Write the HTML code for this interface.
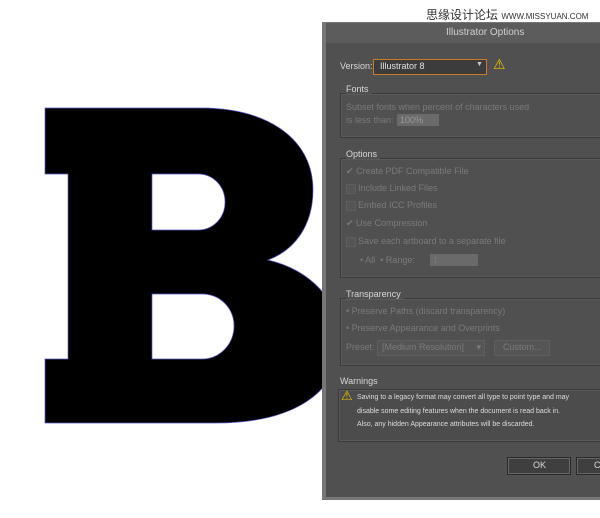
<!DOCTYPE html><html><head><style>
body{margin:0;width:600px;height:518px;background:#fff;position:relative;overflow:hidden;font-family:"Liberation Sans",sans-serif}
.a{position:absolute;white-space:nowrap}
.dlg{position:absolute;left:322px;top:22px;width:290px;height:478px;background:#777}
.in{position:absolute;left:326px;top:23px;width:290px;height:474px;background:#505050}
.tb{position:absolute;left:326px;top:23px;width:290px;height:20px;background:#5c5c5c}
.box{position:absolute;border:1px solid #3a3a3a;box-shadow:inset 0 0 0 1px #5a5a5a}
.t{font-size:9px;color:#d8d8d8}
.d{font-size:9px;color:#7a7a7a}
.cb{position:absolute;width:8px;height:8px;background:#555;border:1px solid #5e5e5e}
</style></head><body>
<svg class="a" style="left:0;top:0" width="600" height="518">
<path fill-rule="evenodd" fill="#000" stroke="#5a5ad0" stroke-width="0.7" d="M45 108 L207 108 C270 110 313 140 313 190 C313 225 295 250 268 260 C310 270 340 300 340 340 C340 395 290 423 216 423 L45 423 L45 359 L68 359 L68 174 L45 174 Z M152 174 L198 174 C213 174 225 186 225 202 C225 218 213 230 198 230 L152 230 Z M152 294 L202 294 C220 294 234 308 234 326 C234 344 220 359 202 359 L152 359 Z"/>
</svg>
<div class="a" style="left:426px;top:6px;font-size:12px;color:#333;font-family:'Liberation Sans','Noto Sans CJK SC',sans-serif">思缘设计论坛 <span style="font-size:8px">WWW.MISSYUAN.COM</span></div>
<div class="dlg"></div><div class="in"></div><div class="tb"></div>
<div class="a" style="left:446px;top:27px;font-size:10px;color:#d0d0d0">Illustrator Options</div>
<div class="a t" style="left:340px;top:61px">Version:</div>
<div class="a" style="left:373px;top:59px;width:112px;height:14px;border:1px solid #c87a2a;background:#3c3c3c"></div>
<div class="a t" style="left:380px;top:61px;color:#e0e0e0">Illustrator 8</div>
<div class="a" style="left:476px;top:61px;font-size:7px;color:#ccc">▼</div>
<div class="a" style="left:493px;top:56px;font-size:14px;color:#f0c000">⚠</div>
<div class="box" style="left:340px;top:93px;width:262px;height:43px"></div>
<div class="a t" style="left:346px;top:84px;background:#505050;padding-right:3px">Fonts</div>
<div class="a d" style="left:346px;top:102px">Subset fonts when percent of characters used</div>
<div class="a d" style="left:346px;top:115px">is less than:</div>
<div class="a" style="left:397px;top:114px;width:42px;height:12px;background:#6a6a6a"></div>
<div class="a d" style="left:400px;top:115px;color:#9a9a9a">100%</div>
<div class="box" style="left:340px;top:158px;width:262px;height:118px"></div>
<div class="a t" style="left:346px;top:149px;background:#505050;padding-right:3px">Options</div>
<div class="a d" style="left:346px;top:166px">✔ Create PDF Compatible File</div>
<div class="cb" style="left:346px;top:184px"></div><div class="a d" style="left:358px;top:183px">Include Linked Files</div>
<div class="cb" style="left:346px;top:201px"></div><div class="a d" style="left:358px;top:200px">Embed ICC Profiles</div>
<div class="a d" style="left:346px;top:218px">✔ Use Compression</div>
<div class="cb" style="left:346px;top:237px"></div><div class="a d" style="left:358px;top:236px">Save each artboard to a separate file</div>
<div class="a d" style="left:360px;top:255px">• All &nbsp;• Range:</div>
<div class="a" style="left:430px;top:254px;width:48px;height:12px;background:#6a6a6a"></div>
<div class="a d" style="left:433px;top:255px">1</div>
<div class="box" style="left:340px;top:298px;width:262px;height:66px"></div>
<div class="a t" style="left:346px;top:289px;background:#505050;padding-right:3px">Transparency</div>
<div class="a d" style="left:346px;top:306px">• Preserve Paths (discard transparency)</div>
<div class="a d" style="left:346px;top:323px">• Preserve Appearance and Overprints</div>
<div class="a d" style="left:346px;top:342px">Preset:</div>
<div class="a" style="left:377px;top:340px;width:106px;height:14px;background:#555;border:1px solid #5e5e5e"></div>
<div class="a d" style="left:382px;top:342px">[Medium Resolution] &nbsp;&nbsp;&nbsp;&nbsp;▾</div>
<div class="a" style="left:494px;top:340px;width:54px;height:14px;background:#555;border:1px solid #5e5e5e"></div>
<div class="a d" style="left:503px;top:342px">Custom...</div>
<div class="a t" style="left:340px;top:376px">Warnings</div>
<div class="box" style="left:338px;top:389px;width:264px;height:51px;background:#4c4c4c"></div>
<div class="a" style="left:341px;top:388px;font-size:13px;color:#f0c000">⚠</div>
<div class="a" style="left:357px;top:391px;font-size:7px;color:#ddd;line-height:13.5px">Saving to a legacy format may convert all type to point type and may<br>disable some editing features when the document is read back in.<br>Also, any hidden Appearance attributes will be discarded.</div>
<div class="a" style="left:507px;top:457px;width:62px;height:16px;background:#3f3f3f;border:1px solid #2a2a2a;box-shadow:inset 0 0 0 1px #666"></div>
<div class="a t" style="left:533px;top:460px">OK</div>
<div class="a" style="left:576px;top:457px;width:40px;height:16px;background:#3f3f3f;border:1px solid #2a2a2a;box-shadow:inset 0 0 0 1px #666"></div>
<div class="a t" style="left:594px;top:460px">C</div>
</body></html>
